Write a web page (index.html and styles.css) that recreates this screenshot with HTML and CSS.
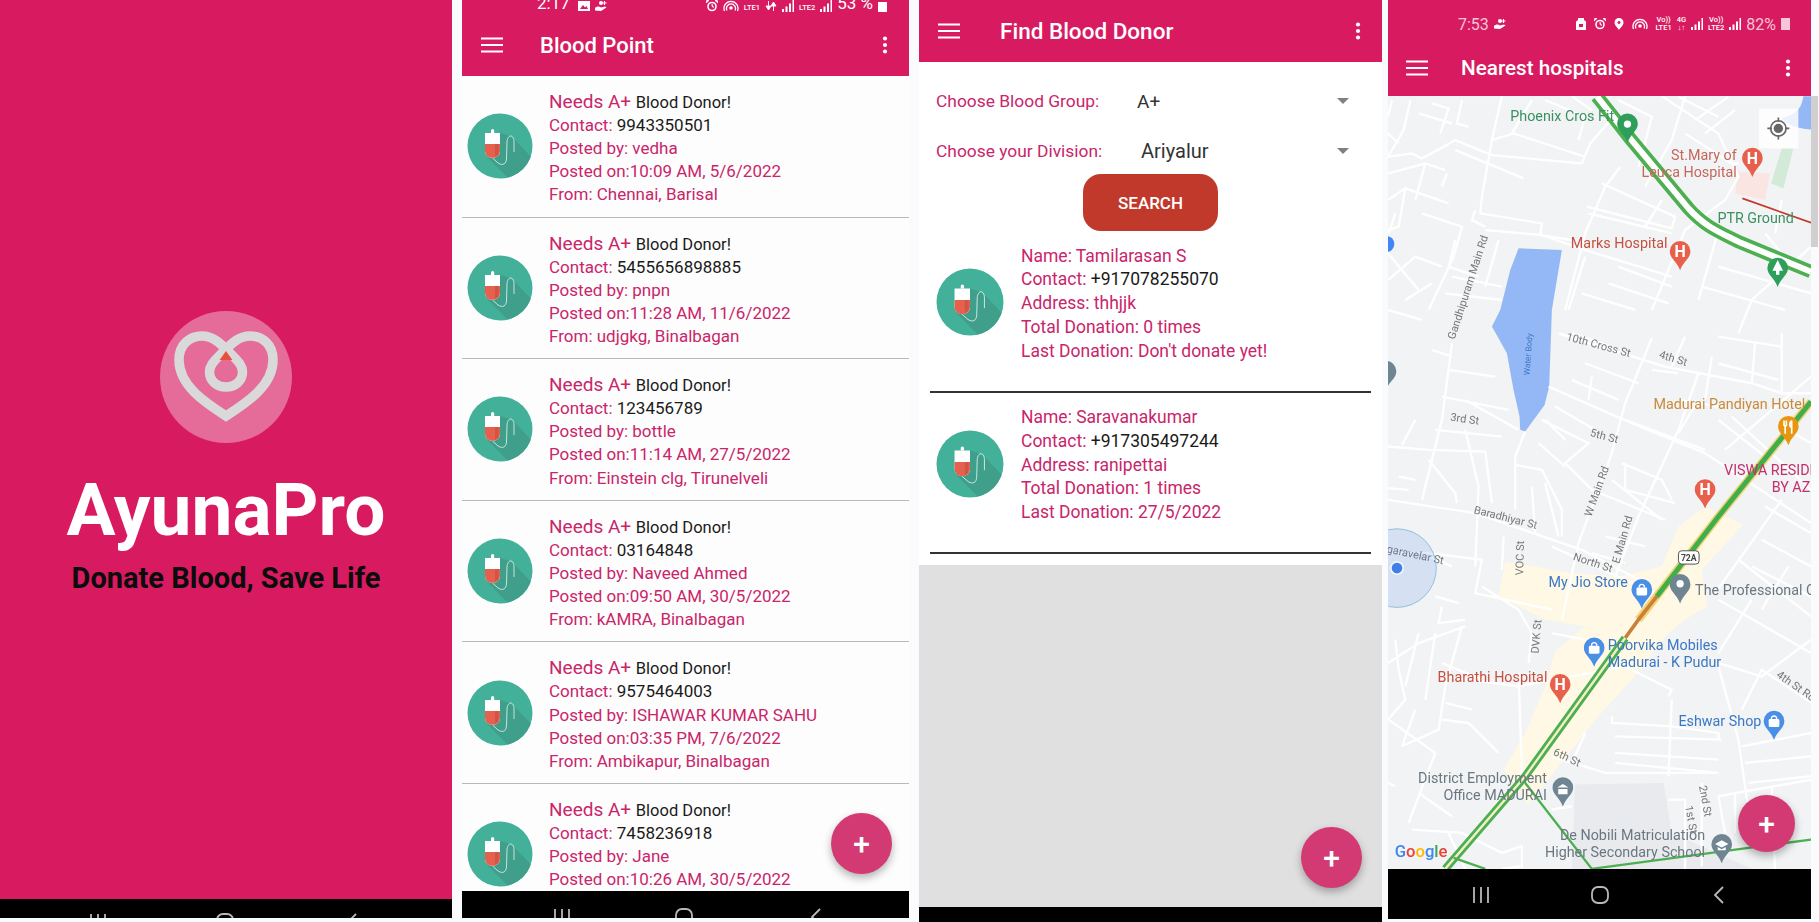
FILE: index.html
```html
<!DOCTYPE html>
<html lang="en">
<head>
    <meta charset="UTF-8">
    <title>AyunaPro</title>
    <link rel="stylesheet" href="styles.css">
</head>
<body>
    <svg class="defs" width="0" height="0">
        <symbol id="bag" viewBox="0 0 66 66">
            <clipPath id="bagClip"><circle cx="33" cy="33" r="32.5"/></clipPath>
            <circle cx="33" cy="33" r="32.5" fill="#43b19a"/>
            <path d="M18 32 L33 20 L40 22 L48 27 L70 50 L70 70 L46 70 L20 44Z" fill="#3f9f8b" clip-path="url(#bagClip)"/>
            <path d="M24 20 V17.5 a1.6 1.6 0 0 1 3.2 0 V20Z" fill="#fff"/>
            <path d="M18 20 H33 V38 a7.5 7 0 0 1 -15 0Z" fill="#fff"/>
            <path d="M18 31 H33 V38 a7.5 7 0 0 1 -15 0Z" fill="#e5604f"/>
            <path d="M28 31 H31.5 V41 L28 44Z" fill="#cf5544"/>
            <path d="M25.5 45 L31 50 C36 53 39 51 39.5 46 L40 29 C40.5 21 47 21 47 29 V39" fill="none" stroke="#e8f5f2" stroke-width=".8"/>
        </symbol>
        <symbol id="menu" viewBox="0 0 22 16">
            <path d="M0 1.5H22M0 8H22M0 14.5H22" stroke="#fff" stroke-width="1.9"/>
        </symbol>
        <symbol id="kebab" viewBox="0 0 6 18">
            <circle cx="3" cy="2.5" r="2.1" fill="#fff"/><circle cx="3" cy="9" r="2.1" fill="#fff"/><circle cx="3" cy="15.5" r="2.1" fill="#fff"/>
        </symbol>
        <symbol id="navrecent" viewBox="0 0 18 18">
            <path d="M2 1V17M9 1V17M16 1V17" stroke="#b9b9b9" stroke-width="1.8"/>
        </symbol>
        <symbol id="navhome" viewBox="0 0 18 18">
            <rect x="1" y="1" width="16" height="16" rx="6" fill="none" stroke="#b9b9b9" stroke-width="1.8"/>
        </symbol>
        <symbol id="navback" viewBox="0 0 18 18">
            <path d="M13 1L5 9L13 17" fill="none" stroke="#b9b9b9" stroke-width="1.8"/>
        </symbol>
        <symbol id="sb-image" viewBox="0 0 12 12">
            <path fill-rule="evenodd" d="M0 1H12V11H0Z M2 9L5 5L7 7.5L8.5 6L10 9Z" fill="#fff"/>
        </symbol>
        <symbol id="sb-hand" viewBox="0 0 12 12">
            <path d="M0 8 C2 6 4 6 6 7.5 L10 6.5 L11.5 7.5 L6 11 L0 10.5Z" fill="#fff"/>
            <circle cx="6" cy="3" r="2" fill="#fff"/>
            <path d="M9.5 1V5M7.5 3H11.5" stroke="#fff" stroke-width="1.1"/>
        </symbol>
        <symbol id="sb-card" viewBox="0 0 12 12">
            <path fill-rule="evenodd" d="M3 0H9V2L11 3.5V12H1V3.5L3 2Z M4 6H8V9H4Z" fill="#fff"/>
        </symbol>
        <symbol id="sb-alarm" viewBox="0 0 12 12">
            <circle cx="6" cy="6.5" r="4" fill="none" stroke="#fff" stroke-width="1.6"/>
            <path d="M0 3L3 0.5L1 0Z M12 3L9 0.5L11 0Z M6 4V6.5L8 7.5" fill="#fff" stroke="#fff" stroke-width=".8"/>
        </symbol>
        <symbol id="sb-pin" viewBox="0 0 12 12">
            <path fill-rule="evenodd" d="M6 0 a4.5 4.5 0 0 1 4.5 4.5 C10.5 7.5 7.5 9.5 6 12 C4.5 9.5 1.5 7.5 1.5 4.5 A4.5 4.5 0 0 1 6 0Z M6 3 a1.5 1.5 0 1 0 .01 0Z" fill="#fff"/>
        </symbol>
        <symbol id="sb-hotspot" viewBox="0 0 16 12">
            <path d="M1.5 11 A7 7 0 1 1 14.5 11 M4 10.5 A4.5 4.5 0 1 1 12 10.5" fill="none" stroke="#fff" stroke-width="1.3"/>
            <circle cx="8" cy="8" r="1.8" fill="#fff"/>
        </symbol>
        <symbol id="sb-signal" viewBox="0 0 12 12">
            <path d="M0 9H2V12H0Z M3.5 6.5H5.5V12H3.5Z M7 3.5H9V12H7Z M10.5 0H12V12H10.5Z" fill="#fff"/>
        </symbol>
        <symbol id="sb-arrows" viewBox="0 0 12 12">
            <path d="M3.5 1V8M1 6L3.5 10L6 6Z M8.5 11V4M6 6L8.5 2L11 6Z" fill="#fff" stroke="#fff" stroke-width=".9"/>
        </symbol>
        <path id="pin" d="M0 -32 a31 31 0 0 1 31 31 c0 22 -22 30 -31 57 c-9 -27 -31 -35 -31 -57 a31 31 0 0 1 31 -31Z"/>
    </svg>

    <!-- splash -->
    <section class="phone splash">
        <div class="splash-body">
            <svg class="logo" viewBox="0 0 132 132">
                <circle cx="66" cy="66" r="66" fill="#e56b98"/>
                <path d="M66 105 C46 92 19 75 19 49 C19 33 30 25 42 25 C54 25 62 34 72 44 C79 51 82.5 55 82.5 61 C82.5 70 75 76 66 76 C57 76 49.5 70 49.5 61 C49.5 55 53 51 60 44 C70 34 78 25 90 25 C102 25 113 33 113 49 C113 75 86 92 66 105Z" fill="none" stroke="#d9d9d9" stroke-width="9.5"/>
                <path d="M66 40 L72.4 49 H59.6Z" fill="#e8503a"/>
            </svg>
            <h1 class="brand">AyunaPro</h1>
            <p class="tagline">Donate Blood, Save Life</p>
        </div>
        <div class="navbar navbar-clip splash-nav">
            <svg><use href="#navrecent"/></svg><svg><use href="#navhome"/></svg><svg><use href="#navback"/></svg>
        </div>
    </section>

    <!-- blood point list -->
    <section class="phone points">
        <header class="appbar">
            <div class="status status-clip">
                <span class="clock">2:17</span>
                <svg class="sb-ic sb-ic-first"><use href="#sb-image"/></svg>
                <svg class="sb-ic"><use href="#sb-hand"/></svg>
                <span class="sb-gap"></span>
                <svg class="sb-ic"><use href="#sb-alarm"/></svg>
                <svg class="sb-ic sb-wide"><use href="#sb-hotspot"/></svg>
                <span class="sb-tiny">LTE1</span>
                <svg class="sb-ic"><use href="#sb-arrows"/></svg>
                <svg class="sb-ic"><use href="#sb-signal"/></svg>
                <span class="sb-tiny">LTE2</span>
                <svg class="sb-ic"><use href="#sb-signal"/></svg>
                <span class="clock">53 %</span>
                <span class="sb-batt"></span>
            </div>
            <div class="toolbar">
                <svg class="ic-menu"><use href="#menu"/></svg>
                <span class="title">Blood Point</span>
                <svg class="ic-kebab"><use href="#kebab"/></svg>
            </div>
        </header>
        <div class="post-list">
            <article class="post">
                <svg class="bag"><use href="#bag"/></svg>
                <div class="post-text">
                    <p class="needs">Needs A+ <b>Blood Donor!</b></p>
                    <p>Contact: <b>9943350501</b></p>
                    <p>Posted by: vedha</p>
                    <p>Posted on:10:09 AM, 5/6/2022</p>
                    <p>From: Chennai, Barisal</p>
                </div>
            </article>
            <article class="post">
                <svg class="bag"><use href="#bag"/></svg>
                <div class="post-text">
                    <p class="needs">Needs A+ <b>Blood Donor!</b></p>
                    <p>Contact: <b>5455656898885</b></p>
                    <p>Posted by: pnpn</p>
                    <p>Posted on:11:28 AM, 11/6/2022</p>
                    <p>From: udjgkg, Binalbagan</p>
                </div>
            </article>
            <article class="post">
                <svg class="bag"><use href="#bag"/></svg>
                <div class="post-text">
                    <p class="needs">Needs A+ <b>Blood Donor!</b></p>
                    <p>Contact: <b>123456789</b></p>
                    <p>Posted by: bottle</p>
                    <p>Posted on:11:14 AM, 27/5/2022</p>
                    <p>From: Einstein clg, Tirunelveli</p>
                </div>
            </article>
            <article class="post">
                <svg class="bag"><use href="#bag"/></svg>
                <div class="post-text">
                    <p class="needs">Needs A+ <b>Blood Donor!</b></p>
                    <p>Contact: <b>03164848</b></p>
                    <p>Posted by: Naveed Ahmed</p>
                    <p>Posted on:09:50 AM, 30/5/2022</p>
                    <p>From: kAMRA, Binalbagan</p>
                </div>
            </article>
            <article class="post">
                <svg class="bag"><use href="#bag"/></svg>
                <div class="post-text">
                    <p class="needs">Needs A+ <b>Blood Donor!</b></p>
                    <p>Contact: <b>9575464003</b></p>
                    <p>Posted by: ISHAWAR KUMAR SAHU</p>
                    <p>Posted on:03:35 PM, 7/6/2022</p>
                    <p>From: Ambikapur, Binalbagan</p>
                </div>
            </article>
            <article class="post">
                <svg class="bag"><use href="#bag"/></svg>
                <div class="post-text">
                    <p class="needs">Needs A+ <b>Blood Donor!</b></p>
                    <p>Contact: <b>7458236918</b></p>
                    <p>Posted by: Jane</p>
                    <p>Posted on:10:26 AM, 30/5/2022</p>
                </div>
            </article>
        </div>
        <div class="fab fab-points">+</div>
        <div class="navbar navbar-clip">
            <svg><use href="#navrecent"/></svg><svg><use href="#navhome"/></svg><svg><use href="#navback"/></svg>
        </div>
    </section>

    <!-- find donor -->
    <section class="phone donors">
        <header class="appbar">
            <div class="toolbar">
                <svg class="ic-menu"><use href="#menu"/></svg>
                <span class="title title-find">Find Blood Donor</span>
                <svg class="ic-kebab"><use href="#kebab"/></svg>
            </div>
        </header>
        <div class="donor-sheet">
            <div class="picker picker-first">
                <span class="picker-label">Choose Blood Group:</span>
                <span class="picker-value value-group">A+</span>
                <span class="caret"></span>
            </div>
            <div class="picker">
                <span class="picker-label">Choose your Division:</span>
                <span class="picker-value value-division">Ariyalur</span>
                <span class="caret"></span>
            </div>
            <button class="search-btn">SEARCH</button>
            <article class="donor">
                <svg class="bag bag-donor"><use href="#bag"/></svg>
                <div class="donor-text">
                    <p>Name: Tamilarasan S</p>
                    <p>Contact: <b>+917078255070</b></p>
                    <p>Address: thhjjk</p>
                    <p>Total Donation: 0 times</p>
                    <p>Last Donation: Don't donate yet!</p>
                </div>
            </article>
            <article class="donor">
                <svg class="bag bag-donor"><use href="#bag"/></svg>
                <div class="donor-text">
                    <p>Name: Saravanakumar</p>
                    <p>Contact: <b>+917305497244</b></p>
                    <p>Address: ranipettai</p>
                    <p>Total Donation: 1 times</p>
                    <p>Last Donation: 27/5/2022</p>
                </div>
            </article>
        </div>
        <div class="donor-empty"></div>
        <div class="fab fab-donors">+</div>
        <div class="navbar donor-nav"></div>
    </section>

    <!-- hospitals map -->
    <section class="phone hospitals">
        <header class="appbar">
            <div class="status status-full">
                <span class="clock clock-map">7:53</span>
                <svg class="sb-ic"><use href="#sb-hand"/></svg>
                <span class="sb-gap"></span>
                <svg class="sb-ic"><use href="#sb-card"/></svg>
                <svg class="sb-ic sb-sp"><use href="#sb-alarm"/></svg>
                <svg class="sb-ic sb-sp"><use href="#sb-pin"/></svg>
                <svg class="sb-ic sb-wide sb-sp"><use href="#sb-hotspot"/></svg>
                <span class="sb-tiny sb-sp">Vo))<br>LTE1</span>
                <span class="sb-tiny">4G<br>↓↑</span>
                <svg class="sb-ic"><use href="#sb-signal"/></svg>
                <span class="sb-tiny">Vo))<br>LTE2</span>
                <svg class="sb-ic"><use href="#sb-signal"/></svg>
                <span class="clock clock-map">82%</span>
                <span class="sb-batt sb-batt-map"></span>
            </div>
            <div class="toolbar toolbar-map">
                <svg class="ic-menu"><use href="#menu"/></svg>
                <span class="title title-map">Nearest hospitals</span>
                <svg class="ic-kebab"><use href="#kebab"/></svg>
            </div>
        </header>
        <div class="map">
            <svg class="map-canvas" viewBox="8 288 1270 2320">
                <rect x="8" y="288" width="1270" height="2320" fill="#f1f3f4"/>

                <!-- areas -->
                <path d="M360 1685 L560 1720 L700 1730 L830 1700 L880 1580 L960 1520 L1075 1575 L950 1710 L965 1820 L900 1860 L850 1900 L740 2040 L640 2150 L520 2300 L430 2415 L355 2310 L420 2200 L480 2060 L510 1955 L600 1880 L480 1860 L340 1790Z" fill="#fef8e4"/>
                <path d="M570 2355 L835 2350 L860 2500 L1100 2608 L560 2608Z" fill="#e8eaed"/>
                <path d="M1190 445 L1225 445 L1195 565 L1158 550Z" fill="#d3ead8"/>
                <path d="M1060 515 L1155 520 L1140 600 L1050 580Z" fill="#fbe5e3"/>
                <path d="M400 745 L530 750 L500 930 L492 1160 L478 1215 L420 1295 L405 1290 L403 1250 L385 1170 L365 1060 L320 980 L345 930 L375 810Z" fill="#93b8f5"/>
                <path d="M1278 288 V388 C1230 385 1200 370 1190 355 C1240 340 1250 320 1255 288Z" fill="#93b8f5"/>

                <!-- streets -->
                <g class="roads">
                    <path d="M20 300 L8 350 M75 300 L55 390 L8 470 M8 470 L80 460 L110 475 L175 440 L210 420 L320 465 L590 490 L615 430 L690 345"/>
                    <path d="M350 288 L320 420 L290 590 L285 640 L470 670 L465 705 L560 720 M320 420 L385 400 L600 470 M140 310 L190 325 L165 400 M230 300 L215 370 L250 380"/>
                    <path d="M8 600 L60 565 L190 610 M60 565 L40 680 L8 690 M8 760 L100 870 M110 640 L230 680 L205 770 L130 930 M300 690 L470 705 L600 750 L860 830 M210 450 L415 535 M185 520 L170 560"/>
                    <path d="M650 550 L870 650 L860 685 L605 620 M705 500 L660 560 L600 700 L540 930 M610 640 L860 700 M830 288 L1000 400 L1060 530 L1020 600 L900 690 L800 930 M1000 690 L940 900 M1278 740 L1100 900 L1060 1000 M700 800 L860 860 M670 850 L850 910"/>
                    <path d="M270 630 L260 660 L300 680 M210 720 L190 800 L280 830 M200 830 L350 860 M180 880 L350 900 M8 930 L110 960 M880 290 L1000 350 M900 400 L1040 490 L1060 490"/>
                    <path d="M8 520 L120 490 L180 510 M120 490 L90 600 M8 400 L40 430 M100 340 L200 370 M440 300 L380 400 M480 300 L600 350 L580 420 M560 288 L620 330 M8 840 L90 770 L170 800 M60 900 L140 850 M30 640 L10 700 M700 300 L800 350 L760 500 M900 288 L860 420 L780 560 M960 400 L1050 330 M1030 290 L930 360"/>
                    <path d="M600 770 L550 930 M1000 800 L1278 880 M950 860 L1200 930 M1140 700 L1190 760 L1170 800 M830 600 L780 680 M1190 600 L1170 700 M590 880 L750 930 M340 720 L300 860"/>
                    <path d="M520 1000 L840 1100 L1100 1150 L1190 1180 L1278 1180 M800 1015 L720 1210 L680 1360 L580 1630 L530 1860 M940 1120 L880 1290 L760 1550 L690 1730 M490 1160 L740 1270 L960 1360 L1278 1570"/>
                    <path d="M420 1295 L390 1370 L390 1530 M8 1500 L270 1540 L590 1650 L800 1760 M200 1030 L170 1260 L110 1500 M8 1340 L130 1350 L300 1355 L320 1510 M390 1395 L470 1410 L530 1530 L530 1610 M470 1260 L610 1330 L540 1390 L620 1470 L840 1560"/>
                    <path d="M140 1050 L200 1070 M190 1110 L330 1130 M170 1190 L370 1230 M240 1200 L400 1290 M150 1290 L350 1310 M240 1290 L280 1460 L270 1700 M50 1335 L90 1260 M130 1380 L210 1480 L215 1510 M40 1430 L90 1440 M8 1465 L70 1470 M440 1460 L450 1600 M480 1450 L520 1610 M355 1610 L350 1710"/>
                    <path d="M600 1090 L760 1150 M560 1140 L700 1200 M510 1220 L630 1290 M480 1260 L540 1320 M460 1330 L540 1400 M620 1130 L610 1200 M1000 1010 L1190 1040 M1110 1030 L1100 1150 M1000 1090 L1180 1140 M800 1110 L880 1120 M940 1200 L880 1300 M880 1200 L1000 1220"/>
                    <path d="M720 1260 L960 1350 M710 1390 L830 1440 L860 1500 M720 1400 L720 1470 L870 1510 M680 1440 L830 1560 M1000 1260 L1140 1370 M1020 1350 L1278 1130 M1040 1250 L1278 1470 M1140 1520 L1278 1600 M1130 1620 L1278 1700 M1060 1680 L1278 1850 M1190 1500 L990 1780 M660 1610 L780 1640 M620 1660 L720 1690 M500 1640 L830 1790"/>
                    <path d="M8 1660 L130 1660 L290 1680 L270 1780 L500 1830 M130 1670 L200 1700 M150 1790 L220 1810 M170 1820 L160 1870 L240 1860 M290 1760 L400 1830 L440 1900 L430 1990 M8 1990 L100 1930 L240 1880 M500 1900 L600 1920"/>
                    <path d="M1100 1700 L1278 1790 M1000 1800 L1278 1960 M1100 1800 L1000 1960 M1210 1700 L1130 1830 M1190 1280 L1278 1330 M560 1000 L680 1040 M900 1010 L860 1100 M1190 1000 L1190 1180 M980 1070 L960 1200"/>
                    <path d="M30 1920 L40 2010 L60 2100 L8 2160 M100 1900 L60 2060 M150 1900 L120 2100 M230 1880 L180 2060 L160 2190 L50 2240 M170 1990 L290 2040 M170 2030 L400 2060 L720 2000 L860 2070 L850 2090 M180 2110 L260 2130 M170 2160 L250 2170 L340 2260 M10 2160 L150 2260 M150 2260 L70 2470 M90 2130 L50 2240"/>
                    <path d="M400 2020 L410 2320 M600 2200 L560 2290 M680 2150 L680 2170 L860 2180 L1000 2200 L1000 2220 M690 2210 L1010 2220 M690 2260 L1000 2280 M690 2290 L1000 2320 L660 2320 L500 2270 M860 2100 L850 2330 M1000 2000 L1060 2220 L1100 2500 M1278 1920 L1130 2030 L1000 1990 M1280 2110 L1130 2010 L1070 2130 M1070 2240 L1278 2200 M1080 2290 L1278 2270 M1090 2350 L1278 2330"/>
                    <path d="M850 2400 L900 2400 L900 2608 M1000 2390 L1280 2340 M1000 2390 L1020 2500 M950 2350 L950 2600 M1050 2380 L1050 2500 M1160 2360 L1170 2608 M8 2350 L30 2360 M100 2380 L200 2450 M80 2490 L230 2500 L350 2560 L410 2540 L410 2600 L350 2608 M190 2500 L240 2608 M500 2430 L560 2420"/>
                </g>

                <!-- traffic -->
                <path class="hw-green" d="M635 288 L735 415 L910 625 C960 680 1000 695 1060 725 L1278 815"/>
                <path class="hw-white" d="M635 288 L735 415 L910 625 C960 680 1000 695 1060 725 L1278 815"/>
                <path d="M1072 595 L1278 668" fill="none" stroke="#c5392c" stroke-width="5"/>
                <path d="M1278 1205 L1000 1550 L760 1860" fill="none" stroke="#f2d273" stroke-width="24"/>
                <path d="M1278 1205 L1000 1550 L815 1790" fill="none" stroke="#3fae4d" stroke-width="15"/>
                <path d="M815 1790 L760 1860 L720 1915" fill="none" stroke="#c9803a" stroke-width="11"/>
                <path class="hw-green hw-thin" d="M720 1915 L420 2330 L180 2608"/>
                <path class="hw-white hw-thin-in" d="M720 1915 L420 2330 L180 2608"/>
                <path d="M420 2350 L620 2608 L1278 2520 M205 2575 L300 2608" fill="none" stroke="#4caf50" stroke-width="7"/>

                <!-- labels -->
                <g class="lbl">
                    <text x="375" y="362" class="t-green">Phoenix Cros Fit</text>
                    <text x="1055" y="480" class="t-red t-end">St.Mary of</text>
                    <text x="1055" y="531" class="t-red t-end">Leuca Hospital</text>
                    <text x="997" y="670" class="t-green">PTR Ground</text>
                    <text x="557" y="745" class="t-hosp">Marks Hospital</text>
                    <text x="805" y="1227" class="t-food">Madurai Pandiyan Hotel</text>
                    <text x="1017" y="1425" class="t-hotel">VISWA RESIDENCY</text>
                    <text x="1160" y="1476" class="t-hotel">BY AZ</text>
                    <text x="490" y="1762" class="t-shop">My Jio Store</text>
                    <text x="930" y="1785" class="t-gray">The Professional Courier</text>
                    <text x="668" y="1952" class="t-shop">Poorvika Mobiles</text>
                    <text x="668" y="2003" class="t-shop">Madurai - K Pudur</text>
                    <text x="157" y="2048" class="t-hosp">Bharathi Hospital</text>
                    <text x="880" y="2178" class="t-shop">Eshwar Shop</text>
                    <text x="485" y="2350" class="t-gray t-end">District Employment</text>
                    <text x="485" y="2401" class="t-gray t-end">Office MADURAI</text>
                    <text x="960" y="2520" class="t-gray t-end">De Nobili Matriculation</text>
                    <text x="960" y="2572" class="t-gray t-end">Higher Secondary School</text>
                </g>
                <g class="st">
                    <text transform="translate(208 1020) rotate(-72)">Gandhipuram Main Rd</text>
                    <text transform="translate(542 1020) rotate(15)">10th Cross St</text>
                    <text transform="translate(820 1073) rotate(17)">4th St</text>
                    <text transform="translate(194 1262) rotate(8)">3rd St</text>
                    <text transform="translate(613 1308) rotate(15)">5th St</text>
                    <text transform="translate(618 1552) rotate(-70)">W Main Rd</text>
                    <text transform="translate(702 1693) rotate(-74)">E Main Rd</text>
                    <text transform="translate(264 1540) rotate(14)">Baradhiyar St</text>
                    <text transform="translate(413 1727) rotate(-88)">VOC St</text>
                    <text transform="translate(562 1680) rotate(18)">North St</text>
                    <text transform="translate(-42 1648) rotate(12)">Singaravelar St</text>
                    <text transform="translate(460 1962) rotate(-85)">DVK St</text>
                    <text transform="translate(1172 2030) rotate(35)">4th St Rd</text>
                    <text transform="translate(502 2265) rotate(25)">6th St</text>
                    <text transform="translate(942 2360) rotate(80)">2nd St</text>
                    <text transform="translate(900 2420) rotate(80)">1st St</text>
                    <text class="st-water" transform="translate(433 1127) rotate(-86)">Water Body</text>
                </g>

                <!-- pins -->
                <use href="#pin" class="p-green" x="727" y="372"/><circle cx="727" cy="372" r="11" fill="#fff"/>
                <use href="#pin" class="p-red" x="1102" y="475"/><text x="1102" y="492" class="pin-h">H</text>
                <use href="#pin" class="p-red" x="885" y="755"/><text x="885" y="772" class="pin-h">H</text>
                <use href="#pin" class="p-red" x="960" y="1470"/><text x="960" y="1487" class="pin-h">H</text>
                <use href="#pin" class="p-red" x="525" y="2055"/><text x="525" y="2072" class="pin-h">H</text>
                <use href="#pin" class="p-green" x="1178" y="805"/><path d="M1178 780 L1194 812 H1183 V824 H1173 V812 H1162Z" fill="#fff"/>
                <use href="#pin" class="p-orange" x="1210" y="1280"/><path d="M1197 1262 V1278 M1204 1262 V1278 M1197 1278 H1204 M1200.5 1278 V1302 M1220 1262 V1302 M1220 1262 C1212 1268 1212 1280 1220 1284" fill="none" stroke="#fff" stroke-width="5"/>
                <use href="#pin" class="p-blue" x="770" y="1770"/><rect x="754" y="1763" width="32" height="24" rx="4" fill="#fff"/><path d="M762 1763 a8 9 0 0 1 16 0" fill="none" stroke="#fff" stroke-width="4"/>
                <use href="#pin" class="p-blue" x="627" y="1945"/><rect x="611" y="1938" width="32" height="24" rx="4" fill="#fff"/><path d="M619 1938 a8 9 0 0 1 16 0" fill="none" stroke="#fff" stroke-width="4"/>
                <use href="#pin" class="p-blue" x="1167" y="2165"/><rect x="1151" y="2158" width="32" height="24" rx="4" fill="#fff"/><path d="M1159 2158 a8 9 0 0 1 16 0" fill="none" stroke="#fff" stroke-width="4"/>
                <use href="#pin" class="p-slate" x="885" y="1755"/><circle cx="885" cy="1752" r="11" fill="#fff"/>
                <use href="#pin" class="p-slate" x="533" y="2365"/><path d="M516 2364 L533 2353 L550 2364Z M519 2368 H547 V2384 H519Z" fill="#fff"/>
                <use href="#pin" class="p-slate" x="1010" y="2535"/><path d="M990 2533 L1010 2522 L1030 2533 L1010 2544Z M998 2542 L1010 2549 L1022 2542 V2552 H998Z" fill="#fff"/>
                <use href="#pin" class="p-slate" x="2" y="1115"/>
                <circle cx="3" cy="732" r="24" fill="#4285f4"/>
                <circle cx="35" cy="1705" r="118" fill="#4285f4" fill-opacity=".16" stroke="#8fc1dd" stroke-width="3"/>
                <circle cx="35" cy="1705" r="21" fill="#fff" fill-opacity=".7"/>
                <circle cx="35" cy="1705" r="16" fill="#3f7fe8"/>

                <rect x="880" y="1653" width="62" height="40" rx="10" fill="#fff" stroke="#555" stroke-width="3"/>
                <text x="911" y="1685" class="shield">72A</text>

                <text x="28" y="2572" class="google"><tspan fill="#4285f4">G</tspan><tspan fill="#ea4335">o</tspan><tspan fill="#fbbc05">o</tspan><tspan fill="#4285f4">g</tspan><tspan fill="#34a853">l</tspan><tspan fill="#ea4335">e</tspan></text>

                <!-- my location button -->
                <rect x="1122" y="325" width="118" height="120" fill="#fff" fill-opacity=".82"/>
                <circle cx="1180" cy="385" r="23" fill="none" stroke="#666" stroke-width="5"/>
                <circle cx="1180" cy="385" r="14" fill="#666"/>
                <path d="M1180 352 V365 M1180 405 V418 M1147 385 H1160 M1200 385 H1213" stroke="#666" stroke-width="5"/>
            </svg>
            <div class="fab fab-map">+</div>
        </div>
        <div class="navbar map-nav">
            <svg><use href="#navrecent"/></svg><svg><use href="#navhome"/></svg><svg><use href="#navback"/></svg>
        </div>
        <div class="map-scroll"></div>
    </section>
</body>
</html>
```

FILE: styles.css
```css
* {
    box-sizing: border-box;
}
html, body {
    margin: 0;
    height: 100%;
    overflow: hidden;
}
body {
    display: flex;
    background: #fafbfc;
    font-family: Roboto, "Liberation Sans", sans-serif;
    color: #c9256a;
}
p, h1 {
    margin: 0;
}
b {
    font-weight: 400;
    color: #1a1a1a;
}
.defs {
    position: absolute;
}

.phone {
    position: relative;
    display: flex;
    flex-direction: column;
    flex: none;
    background: #fff;
}
.splash {
    width: 452px;
    height: 918px;
    background: #d81b60;
}
.points {
    width: 447px;
    height: 918px;
    margin-left: 10px;
}
.donors {
    width: 463px;
    height: 922px;
    margin-left: 10px;
}
.hospitals {
    width: 423px;
    height: 919px;
    margin-left: 6px;
}

/* splash */
.splash-body {
    flex: 1;
    display: flex;
    flex-direction: column;
    align-items: center;
    padding-top: 311px;
    overflow: hidden;
}
.logo {
    width: 132px;
    height: 132px;
}
.brand {
    margin-top: 24px;
    font-size: 73px;
    line-height: 86px;
    font-weight: 700;
    color: #fff;
}
.tagline {
    margin-top: 7px;
    font-size: 29px;
    line-height: 36px;
    font-weight: 700;
    color: #0c0c0c;
}

/* app bars */
.appbar {
    flex: none;
    background: #d81b60;
    color: #fff;
}
.toolbar {
    position: relative;
    display: flex;
    align-items: center;
    height: 62px;
    padding: 0 21px 0 19px;
}
.toolbar-map {
    height: 56px;
    padding: 0 20px 0 18px;
}
.ic-menu {
    width: 22px;
    height: 16px;
    flex: none;
}
.ic-kebab {
    width: 6px;
    height: 18px;
    margin-left: auto;
    flex: none;
}
.title {
    margin-left: 37px;
    font-size: 22px;
    font-weight: 500;
}
.title-find {
    margin-left: 40px;
    font-size: 22.5px;
}
.title-map {
    margin-left: 33px;
    font-size: 20.7px;
}

/* status bars */
.status {
    display: flex;
    align-items: center;
    overflow: hidden;
    gap: 5px;
    color: #fff;
}
.status-clip {
    height: 14px;
    padding: 0 22px 2px 75px;
    align-items: flex-end;
}
.status-full {
    height: 40px;
    padding: 8px 21px 0 70px;
}
.clock {
    font-size: 17px;
    line-height: 17px;
}
.clock-map {
    font-size: 16px;
    color: #f3c6d8;
}
.sb-ic {
    width: 12px;
    height: 12px;
    flex: none;
}
.sb-ic-first {
    margin-left: 3px;
}
.sb-wide {
    width: 16px;
}
.sb-sp {
    margin-left: 2px;
}
.sb-tiny {
    font-size: 7.5px;
    line-height: 8px;
    font-weight: 500;
    text-align: center;
}
.sb-gap {
    flex: 1;
}
.sb-batt {
    width: 9px;
    height: 10px;
    background: #fff;
}
.sb-batt-map {
    height: 12px;
    background: #f3c6d8;
}

/* posts */
.post-list {
    flex: 1;
    overflow: hidden;
}
.post {
    display: flex;
    align-items: center;
    height: 141.6px;
    padding-left: 5px;
    background: #fdfdfd;
    border-bottom: 1.5px solid #b9b9b9;
}
.bag {
    width: 66px;
    height: 66px;
    flex: none;
}
.post-text {
    align-self: flex-start;
    margin-left: 16px;
    padding-top: 14px;
    font-size: 17px;
    line-height: 23.1px;
}
.needs {
    font-size: 19px;
}
.needs b {
    font-size: 16.5px;
}

/* find donor */
.donor-sheet {
    flex: none;
    height: 503px;
    padding-top: 14px;
}
.picker {
    display: flex;
    align-items: center;
    height: 50px;
    padding: 0 33px 0 17px;
}
.picker-label {
    width: 184px;
    font-size: 17.4px;
    flex: none;
}
.value-group {
    margin-left: 17px;
    font-size: 19px;
}
.value-division {
    margin-left: 21px;
    font-size: 20px;
}
.picker-value {
    color: #333;
}
.caret {
    margin-left: auto;
    border: 6px solid transparent;
    border-top: 6px solid #808080;
    border-bottom: 0;
}
.search-btn {
    display: block;
    width: 135px;
    height: 57px;
    margin: -2px auto 0;
    border: 0;
    border-radius: 18px;
    background: #c0392b;
    color: #fff;
    font: 500 17px Roboto, sans-serif;
}
.donor {
    display: flex;
    align-items: center;
    height: 161px;
    margin: 0 11px;
    padding: 0 0 14px 6px;
    border-bottom: 2px solid #333;
}
.donor:first-of-type {
    height: 162px;
}
.bag-donor {
    width: 68px;
    height: 68px;
    margin-bottom: 4px;
}
.donor-text {
    margin-left: 17px;
    font-size: 17.5px;
    line-height: 23.8px;
}
.donor-empty {
    flex: 1;
    background: #e0e0e0;
}
.donor-nav {
    height: 15px;
}

/* map */
.map {
    position: relative;
    flex: 1;
    overflow: hidden;
}
.map-canvas {
    display: block;
    width: 423px;
    height: 773px;
    filter: blur(.4px);
}
.roads path {
    fill: none;
    stroke: #fff;
    stroke-width: 7;
}
.hw-green {
    fill: none;
    stroke: #4caf50;
    stroke-width: 40;
}
.hw-white {
    fill: none;
    stroke: #fff;
    stroke-width: 18;
}
.hw-thin {
    stroke-width: 24;
}
.hw-thin-in {
    stroke: #f6eecb;
    stroke-width: 7;
}
.lbl text {
    font-size: 43px;
}
.t-end {
    text-anchor: end;
}
.t-green {
    fill: #3a9161;
}
.t-red {
    fill: #c4685c;
}
.t-hosp {
    fill: #c5503f;
}
.t-food {
    fill: #c98a3c;
}
.t-hotel {
    fill: #c2306b;
}
.t-shop {
    fill: #3b78c4;
}
.t-gray {
    fill: #6a7780;
}
.st text {
    font-size: 33px;
    fill: #777;
}
.st .st-water {
    font-size: 25px;
    fill: #3b78c4;
}
.p-green {
    fill: #2e9e5b;
}
.p-red {
    fill: #e8604c;
}
.p-orange {
    fill: #e8960f;
}
.p-blue {
    fill: #4a8fe7;
}
.p-slate {
    fill: #6f8591;
}
.pin-h {
    font-size: 48px;
    font-weight: 700;
    fill: #fff;
    text-anchor: middle;
}
.shield {
    font-size: 26px;
    font-weight: 700;
    fill: #444;
    text-anchor: middle;
}
.google {
    font-size: 50px;
    font-weight: 500;
}

/* fab */
.fab {
    position: absolute;
    display: flex;
    align-items: center;
    justify-content: center;
    width: 61px;
    height: 61px;
    border-radius: 50%;
    background: #d33a74;
    color: #fff;
    font-size: 30px;
    font-weight: 500;
    box-shadow: 0 4px 8px rgba(0, 0, 0, .3);
}
.fab-points {
    right: 17px;
    top: 813px;
}
.fab-donors {
    right: 20px;
    top: 827px;
}
.fab-map {
    right: 16px;
    top: 699px;
    width: 57px;
    height: 57px;
}

/* nav bars */
.navbar {
    position: relative;
    flex: none;
    display: flex;
    background: #000;
}
.navbar svg {
    position: absolute;
    width: 18px;
    height: 18px;
}
.navbar-clip {
    height: 27px;
    overflow: hidden;
}
.navbar-clip svg {
    top: 17px;
}
.navbar-clip svg:nth-child(1) {
    left: 91px;
}
.navbar-clip svg:nth-child(2) {
    left: 213px;
}
.navbar-clip svg:nth-child(3) {
    left: 345px;
}
.splash-nav {
    height: 19px;
}
.splash-nav svg {
    top: 14px;
}
.splash-nav svg:nth-child(1) {
    left: 89px;
}
.splash-nav svg:nth-child(2) {
    left: 216px;
}
.splash-nav svg:nth-child(3) {
    left: 343px;
}
.map-nav {
    height: 50px;
}
.map-nav svg {
    top: 17px;
}
.map-nav svg:nth-child(1) {
    left: 84px;
}
.map-nav svg:nth-child(2) {
    left: 203px;
}
.map-nav svg:nth-child(3) {
    left: 322px;
}
.map-scroll {
    position: absolute;
    left: 423px;
    top: 96px;
    width: 7px;
    height: 151px;
    background: #d0d0d0;
}
```
